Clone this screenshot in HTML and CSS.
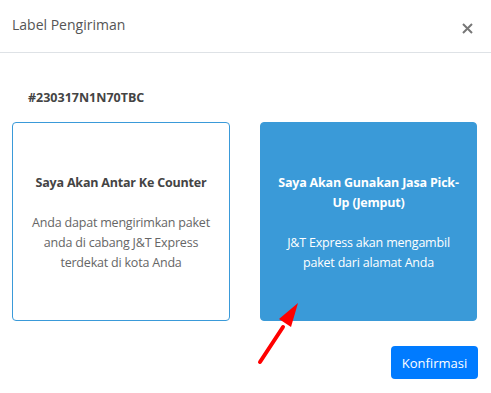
FILE: index.html
```html
<!DOCTYPE html>
<html>
<head>
<meta charset="UTF-8">
<title>Label Pengiriman</title>
<link rel="stylesheet" href="styles.css">
</head>
<body>
	<div class="modal">
		<div class="modal-head">
			<span class="modal-title">Label Pengiriman</span>
			<svg class="close" width="11" height="11" viewBox="0 0 11 11">
				<path d="M1 1 L10 10 M10 1 L1 10" stroke="#777" stroke-width="2"/>
			</svg>
		</div>
		<div class="modal-body">
			<div class="code">#230317N1N70TBC</div>
			<div class="choices">
				<div class="choice">
					<div class="choice-title">Saya Akan Antar Ke Counter</div>
					<div class="choice-text">Anda dapat mengirimkan paket anda di cabang J&amp;T Express terdekat di kota Anda</div>
				</div>
				<div class="choice active">
					<div class="choice-title">Saya Akan Gunakan Jasa Pick-Up (Jemput)</div>
					<div class="choice-text">J&amp;T Express akan mengambil paket dari alamat Anda</div>
				</div>
			</div>
			<div class="modal-foot">
				<button class="confirm">Konfirmasi</button>
			</div>
		</div>
		<svg class="arrow" width="60" height="80" viewBox="0 0 60 80">
			<line x1="10" y1="70" x2="33" y2="35" stroke="#ff0000" stroke-width="4" stroke-linecap="round"/>
			<polygon points="48,11 29,27 41,35" fill="#ff0000"/>
		</svg>
	</div>
</body>
</html>
```

FILE: styles.css
```css
html, body { margin: 0; padding: 0; background: #fff; }
body { font-family: "Open Sans", "Noto Sans", sans-serif; font-size: 13px; color: #555; }
.modal { position: relative; width: 491px; height: 393px; }
.modal-head { height: 52px; display: flex; align-items: center; justify-content: space-between; padding: 0 18px 0 12px; border-bottom: 1px solid #dee2e6; }
.modal-title { font-size: 14px; color: #555; margin-top: -4px; }
.close { margin-top: 4px; }
.modal-body { padding: 36px 13px 0 12px; }
.code { font-weight: bold; font-size: 12.5px; color: #444; padding-left: 16px; height: 33px; }
.choices { display: grid; grid-template-columns: 218px 217px; gap: 30px; }
.choice { box-sizing: border-box; height: 199px; border: 1px solid #3a9ad9; border-radius: 4px; display: flex; flex-direction: column; justify-content: center; align-items: center; text-align: center; padding: 3px 14px 0; font-size: 12.5px; letter-spacing: -0.2px; }
.choice.active { background: #3a9ad8; border-color: #3a9ad8; color: #fff; }
.choice-title { font-weight: bold; color: #444; line-height: 20px; margin-bottom: 20px; }
.choice-text { color: #666; line-height: 20px; }
.choice.active .choice-title, .choice.active .choice-text { color: #fff; }
.modal-foot { display: flex; justify-content: flex-end; padding-top: 25px; }
.confirm { width: 87px; height: 33px; background: #007bff; color: #fff; border: none; border-radius: 4px; font-family: inherit; font-size: 13px; padding: 0; }
.arrow { position: absolute; left: 250px; top: 292px; }
```
